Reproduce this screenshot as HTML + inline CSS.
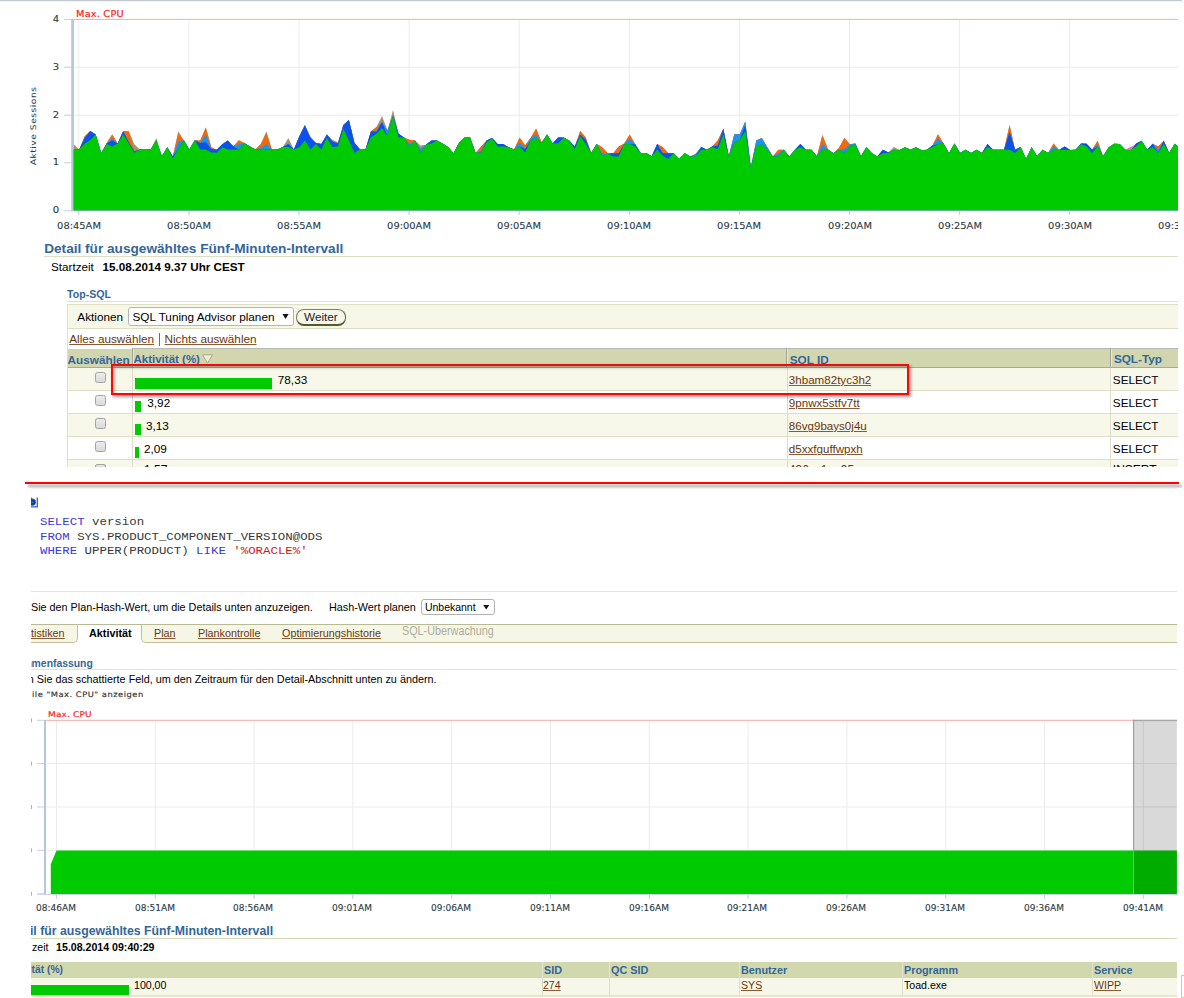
<!DOCTYPE html>
<html><head><meta charset="utf-8"><title>ASH</title><style>
html,body{margin:0;padding:0;background:#fff;}
body{width:1184px;height:998px;position:relative;overflow:hidden;font-family:"Liberation Sans",sans-serif;color:#000;}
.a{position:absolute;white-space:nowrap;line-height:1;}
.ar{font-family:"Liberation Sans",sans-serif;}
.vd{font-family:"DejaVu Sans",sans-serif;}
.mono{font-family:"Liberation Mono",monospace;}
.b{font-weight:bold;}
.blue{color:#336699;}
.lnk{color:#6a3608;text-decoration:underline;text-decoration-color:#8a5a36;}
.box{position:absolute;}
svg{position:absolute;left:0;top:0;}
</style></head><body>
<svg width="1184" height="998" viewBox="0 0 1184 998">
<defs><clipPath id="c1"><rect x="73.5" y="0" width="1104.5" height="211"/></clipPath><clipPath id="c2"><rect x="30" y="700" width="1147.5" height="230"/></clipPath></defs>
<rect x="0" y="0" width="1182" height="1.2" fill="#c4c8d0"/>
<rect x="78.3" y="19.5" width="1" height="195" fill="#ebebee"/>
<rect x="188.4" y="19.5" width="1" height="195" fill="#ebebee"/>
<rect x="298.5" y="19.5" width="1" height="195" fill="#ebebee"/>
<rect x="408.6" y="19.5" width="1" height="195" fill="#ebebee"/>
<rect x="518.7" y="19.5" width="1" height="195" fill="#ebebee"/>
<rect x="628.8" y="19.5" width="1" height="195" fill="#ebebee"/>
<rect x="738.9" y="19.5" width="1" height="195" fill="#ebebee"/>
<rect x="849.0" y="19.5" width="1" height="195" fill="#ebebee"/>
<rect x="959.1" y="19.5" width="1" height="195" fill="#ebebee"/>
<rect x="1069.2" y="19.5" width="1" height="195" fill="#ebebee"/>
<rect x="73.5" y="66.7" width="1104.5" height="1" fill="#ebebee"/>
<rect x="73.5" y="114.7" width="1104.5" height="1" fill="#ebebee"/>
<rect x="73.5" y="162.3" width="1104.5" height="1" fill="#ebebee"/>
<rect x="73.5" y="18.9" width="1104.5" height="1" fill="#f9a9a9"/>
<rect x="64" y="18.9" width="8" height="1" fill="#c3d0e2"/>
<rect x="64" y="66.7" width="8" height="1" fill="#c3d0e2"/>
<rect x="64" y="114.7" width="8" height="1" fill="#c3d0e2"/>
<rect x="64" y="162.3" width="8" height="1" fill="#c3d0e2"/>
<rect x="64" y="210.3" width="8" height="1" fill="#c3d0e2"/>
<rect x="71.2" y="19" width="2.8" height="192.3" fill="#b7c8e1"/>
<g clip-path="url(#c1)">
<path d="M73.7,210.6 L73.7,144.3 L79.2,149.5 L84.7,136.3 L90.2,130.9 L95.7,134.6 L101.2,153.2 L106.7,143.1 L112.2,134.6 L117.7,143.6 L123.2,130.9 L128.8,130.9 L134.3,144.3 L139.8,149.5 L145.3,149.5 L150.8,149.5 L156.3,138.0 L161.8,156.2 L167.3,147.3 L172.8,156.6 L178.3,131.2 L183.8,140.2 L189.3,149.5 L194.8,140.2 L200.3,140.5 L205.8,127.4 L211.3,147.3 L216.8,149.8 L222.3,144.3 L227.8,140.5 L233.3,146.5 L238.9,140.2 L244.4,143.1 L249.9,146.5 L255.4,149.5 L260.9,143.9 L266.4,131.2 L271.9,149.5 L277.4,149.5 L282.9,147.0 L288.4,138.0 L293.9,149.5 L299.4,136.3 L304.9,125.3 L310.4,136.3 L315.9,143.1 L321.4,143.9 L326.9,134.6 L332.4,139.7 L337.9,142.2 L343.4,124.5 L348.9,119.9 L354.5,143.1 L360.0,149.5 L365.5,149.5 L371.0,131.2 L376.5,127.0 L382.0,116.0 L387.5,130.4 L393.0,110.1 L398.5,133.8 L404.0,137.5 L409.5,139.7 L415.0,140.5 L420.5,145.6 L426.0,144.8 L431.5,140.5 L437.0,140.5 L442.5,143.6 L448.0,147.0 L453.5,153.2 L459.0,143.1 L464.6,137.5 L470.1,137.5 L475.6,152.9 L481.1,146.5 L486.6,140.5 L492.1,138.0 L497.6,143.9 L503.1,143.9 L508.6,147.3 L514.1,149.5 L519.6,137.5 L525.1,145.3 L530.6,138.0 L536.1,128.4 L541.6,142.2 L547.1,134.6 L552.6,143.6 L558.1,137.5 L563.6,137.5 L569.1,140.5 L574.7,146.5 L580.2,130.9 L585.7,137.2 L591.2,152.9 L596.7,143.9 L602.2,147.3 L607.7,152.9 L613.2,153.2 L618.7,146.5 L624.2,143.6 L629.7,134.6 L635.2,144.3 L640.7,152.9 L646.2,152.9 L651.7,156.2 L657.2,143.9 L662.7,147.0 L668.2,153.2 L673.7,153.2 L679.2,159.1 L684.8,153.2 L690.3,156.6 L695.8,153.7 L701.3,147.0 L706.8,149.8 L712.3,146.5 L717.8,140.2 L723.3,128.7 L728.8,156.2 L734.3,134.3 L739.8,134.3 L745.3,121.6 L750.8,167.6 L756.3,140.5 L761.8,138.0 L767.3,147.3 L772.8,156.6 L778.3,149.8 L783.8,149.8 L789.4,156.6 L794.9,149.8 L800.4,143.9 L805.9,149.8 L811.4,149.8 L816.9,156.2 L822.4,135.1 L827.9,149.0 L833.4,153.2 L838.9,148.1 L844.4,138.0 L849.9,144.3 L855.4,143.6 L860.9,156.2 L866.4,147.3 L871.9,153.2 L877.4,156.6 L882.9,149.8 L888.4,152.4 L893.9,147.0 L899.5,149.8 L905.0,147.3 L910.5,149.8 L916.0,147.3 L921.5,150.2 L927.0,149.8 L932.5,145.6 L938.0,134.3 L943.5,143.6 L949.0,153.2 L954.5,143.6 L960.0,152.9 L965.5,149.8 L971.0,152.9 L976.5,149.8 L982.0,152.9 L987.5,143.9 L993.0,149.8 L998.5,149.8 L1004.0,149.8 L1009.6,125.0 L1015.1,149.8 L1020.6,147.0 L1026.1,159.1 L1031.6,147.3 L1037.1,156.2 L1042.6,149.7 L1048.1,152.9 L1053.6,143.6 L1059.1,150.0 L1064.6,146.6 L1070.1,150.0 L1075.6,149.7 L1081.1,143.6 L1086.6,143.8 L1092.1,149.7 L1097.6,140.7 L1103.1,156.2 L1108.6,147.5 L1114.1,143.8 L1119.7,143.9 L1125.2,149.7 L1130.7,149.7 L1136.2,143.6 L1141.7,140.7 L1147.2,149.7 L1152.7,143.8 L1158.2,146.6 L1163.7,140.7 L1169.2,152.9 L1174.7,143.8 L1178.0,146.6 L1178.0,210.6 Z" fill="#a4946f"/>
<path d="M73.7,210.6 L73.7,149.5 L79.2,149.5 L84.7,136.3 L90.2,130.9 L95.7,134.6 L101.2,153.2 L106.7,143.1 L112.2,134.6 L117.7,143.6 L123.2,130.9 L128.8,132.1 L134.3,150.7 L139.8,149.5 L145.3,149.5 L150.8,149.5 L156.3,140.2 L161.8,156.2 L167.3,147.3 L172.8,156.6 L178.3,133.4 L183.8,140.2 L189.3,149.5 L194.8,140.2 L200.3,140.5 L205.8,127.4 L211.3,147.3 L216.8,149.8 L222.3,144.3 L227.8,140.5 L233.3,146.5 L238.9,140.2 L244.4,143.1 L249.9,146.5 L255.4,149.5 L260.9,143.9 L266.4,132.9 L271.9,149.5 L277.4,149.5 L282.9,147.0 L288.4,143.9 L293.9,149.5 L299.4,136.3 L304.9,125.3 L310.4,138.0 L315.9,143.1 L321.4,143.9 L326.9,134.6 L332.4,141.4 L337.9,143.6 L343.4,125.3 L348.9,119.9 L354.5,143.1 L360.0,149.5 L365.5,149.5 L371.0,131.2 L376.5,127.0 L382.0,122.0 L387.5,130.4 L393.0,115.2 L398.5,133.8 L404.0,137.5 L409.5,139.7 L415.0,140.5 L420.5,149.0 L426.0,144.8 L431.5,140.5 L437.0,140.5 L442.5,143.6 L448.0,147.0 L453.5,153.2 L459.0,143.1 L464.6,137.5 L470.1,137.5 L475.6,152.9 L481.1,146.5 L486.6,140.5 L492.1,138.0 L497.6,143.9 L503.1,143.9 L508.6,147.3 L514.1,149.5 L519.6,137.5 L525.1,145.3 L530.6,138.0 L536.1,128.4 L541.6,142.2 L547.1,134.6 L552.6,143.6 L558.1,137.5 L563.6,137.5 L569.1,140.5 L574.7,146.5 L580.2,130.9 L585.7,137.2 L591.2,152.9 L596.7,143.9 L602.2,147.3 L607.7,152.9 L613.2,153.2 L618.7,146.5 L624.2,143.6 L629.7,134.6 L635.2,144.3 L640.7,152.9 L646.2,152.9 L651.7,156.2 L657.2,143.9 L662.7,147.0 L668.2,153.2 L673.7,153.2 L679.2,159.1 L684.8,153.2 L690.3,156.6 L695.8,153.7 L701.3,147.0 L706.8,149.8 L712.3,146.5 L717.8,140.2 L723.3,128.7 L728.8,156.2 L734.3,134.3 L739.8,134.3 L745.3,121.6 L750.8,167.6 L756.3,140.5 L761.8,138.0 L767.3,147.3 L772.8,156.6 L778.3,149.8 L783.8,149.8 L789.4,156.6 L794.9,149.8 L800.4,143.9 L805.9,149.8 L811.4,149.8 L816.9,156.2 L822.4,135.1 L827.9,149.0 L833.4,153.2 L838.9,148.1 L844.4,138.0 L849.9,144.3 L855.4,143.6 L860.9,156.2 L866.4,147.3 L871.9,153.2 L877.4,156.6 L882.9,149.8 L888.4,152.4 L893.9,149.8 L899.5,150.3 L905.0,147.3 L910.5,149.8 L916.0,147.3 L921.5,150.2 L927.0,149.8 L932.5,145.6 L938.0,134.3 L943.5,143.6 L949.0,153.2 L954.5,143.6 L960.0,152.9 L965.5,149.8 L971.0,152.9 L976.5,149.8 L982.0,152.9 L987.5,143.9 L993.0,149.8 L998.5,149.8 L1004.0,149.8 L1009.6,125.0 L1015.1,149.8 L1020.6,147.0 L1026.1,159.1 L1031.6,147.3 L1037.1,156.2 L1042.6,149.7 L1048.1,152.9 L1053.6,143.6 L1059.1,150.0 L1064.6,146.6 L1070.1,150.0 L1075.6,149.7 L1081.1,143.6 L1086.6,143.8 L1092.1,149.7 L1097.6,140.7 L1103.1,156.2 L1108.6,147.5 L1114.1,143.8 L1119.7,143.9 L1125.2,149.7 L1130.7,149.7 L1136.2,143.6 L1141.7,140.7 L1147.2,149.7 L1152.7,143.8 L1158.2,146.6 L1163.7,140.7 L1169.2,152.9 L1174.7,143.8 L1178.0,146.6 L1178.0,210.6 Z" fill="#ee6a10"/>
<path d="M73.7,210.6 L73.7,149.5 L79.2,149.5 L84.7,138.0 L90.2,130.9 L95.7,134.6 L101.2,153.2 L106.7,143.6 L112.2,138.5 L117.7,143.6 L123.2,131.2 L128.8,142.2 L134.3,151.5 L139.8,149.5 L145.3,149.5 L150.8,149.5 L156.3,140.2 L161.8,156.2 L167.3,147.3 L172.8,156.6 L178.3,141.4 L183.8,140.2 L189.3,149.5 L194.8,140.2 L200.3,143.1 L205.8,134.6 L211.3,149.0 L216.8,149.8 L222.3,144.3 L227.8,140.5 L233.3,146.5 L238.9,144.3 L244.4,143.1 L249.9,146.5 L255.4,149.5 L260.9,148.1 L266.4,144.3 L271.9,149.5 L277.4,149.5 L282.9,147.0 L288.4,143.9 L293.9,149.5 L299.4,136.3 L304.9,125.3 L310.4,138.0 L315.9,143.1 L321.4,143.9 L326.9,134.6 L332.4,141.4 L337.9,143.6 L343.4,125.3 L348.9,119.9 L354.5,143.1 L360.0,149.5 L365.5,149.5 L371.0,131.2 L376.5,130.4 L382.0,122.0 L387.5,130.4 L393.0,115.2 L398.5,133.8 L404.0,137.5 L409.5,143.9 L415.0,140.5 L420.5,149.0 L426.0,144.8 L431.5,140.5 L437.0,140.5 L442.5,143.6 L448.0,147.0 L453.5,153.2 L459.0,143.1 L464.6,137.5 L470.1,137.5 L475.6,152.9 L481.1,150.7 L486.6,140.5 L492.1,138.0 L497.6,143.9 L503.1,143.9 L508.6,147.3 L514.1,149.5 L519.6,142.2 L525.1,149.0 L530.6,138.0 L536.1,134.6 L541.6,143.1 L547.1,134.6 L552.6,143.6 L558.1,137.5 L563.6,137.5 L569.1,140.5 L574.7,146.5 L580.2,134.6 L585.7,139.7 L591.2,152.9 L596.7,143.9 L602.2,153.2 L607.7,153.7 L613.2,153.2 L618.7,153.2 L624.2,144.3 L629.7,138.9 L635.2,144.3 L640.7,152.9 L646.2,152.9 L651.7,156.2 L657.2,143.9 L662.7,153.2 L668.2,153.2 L673.7,153.2 L679.2,159.1 L684.8,153.2 L690.3,156.6 L695.8,153.7 L701.3,147.0 L706.8,149.8 L712.3,146.5 L717.8,145.6 L723.3,128.7 L728.8,156.2 L734.3,134.3 L739.8,134.3 L745.3,121.6 L750.8,167.6 L756.3,140.5 L761.8,138.0 L767.3,147.3 L772.8,156.6 L778.3,153.2 L783.8,149.8 L789.4,156.6 L794.9,149.8 L800.4,143.9 L805.9,149.8 L811.4,149.8 L816.9,156.2 L822.4,144.3 L827.9,149.8 L833.4,153.2 L838.9,149.8 L844.4,149.0 L849.9,144.3 L855.4,143.6 L860.9,156.2 L866.4,147.3 L871.9,153.2 L877.4,156.6 L882.9,149.8 L888.4,152.4 L893.9,149.8 L899.5,150.3 L905.0,147.3 L910.5,149.8 L916.0,147.3 L921.5,150.2 L927.0,149.8 L932.5,145.6 L938.0,138.5 L943.5,143.6 L949.0,153.2 L954.5,143.6 L960.0,152.9 L965.5,149.8 L971.0,152.9 L976.5,149.8 L982.0,152.9 L987.5,143.9 L993.0,149.8 L998.5,149.8 L1004.0,149.8 L1009.6,132.1 L1015.1,149.8 L1020.6,147.0 L1026.1,159.1 L1031.6,147.3 L1037.1,156.2 L1042.6,149.7 L1048.1,152.9 L1053.6,146.6 L1059.1,150.0 L1064.6,146.6 L1070.1,150.0 L1075.6,149.7 L1081.1,143.6 L1086.6,143.8 L1092.1,149.7 L1097.6,143.8 L1103.1,156.2 L1108.6,147.5 L1114.1,143.8 L1119.7,143.9 L1125.2,149.7 L1130.7,149.7 L1136.2,143.6 L1141.7,140.7 L1147.2,149.7 L1152.7,143.8 L1158.2,149.7 L1163.7,140.7 L1169.2,152.9 L1174.7,143.8 L1178.0,146.6 L1178.0,210.6 Z" fill="#1a94ee"/>
<path d="M73.7,210.6 L73.7,149.5 L79.2,149.5 L84.7,138.0 L90.2,130.9 L95.7,134.6 L101.2,153.2 L106.7,143.6 L112.2,140.5 L117.7,143.6 L123.2,131.2 L128.8,142.2 L134.3,151.5 L139.8,149.5 L145.3,149.5 L150.8,149.5 L156.3,140.2 L161.8,156.2 L167.3,147.3 L172.8,156.6 L178.3,149.0 L183.8,140.2 L189.3,149.5 L194.8,140.2 L200.3,143.1 L205.8,142.2 L211.3,149.0 L216.8,149.8 L222.3,144.3 L227.8,140.5 L233.3,146.5 L238.9,149.5 L244.4,143.6 L249.9,146.5 L255.4,149.5 L260.9,149.5 L266.4,149.5 L271.9,149.5 L277.4,149.5 L282.9,147.0 L288.4,143.9 L293.9,149.5 L299.4,136.3 L304.9,125.3 L310.4,138.0 L315.9,143.1 L321.4,143.9 L326.9,134.6 L332.4,141.4 L337.9,143.6 L343.4,125.3 L348.9,119.9 L354.5,143.1 L360.0,149.5 L365.5,149.5 L371.0,131.2 L376.5,131.8 L382.0,122.0 L387.5,136.3 L393.0,115.2 L398.5,133.8 L404.0,137.5 L409.5,146.5 L415.0,140.5 L420.5,152.7 L426.0,144.8 L431.5,140.5 L437.0,140.5 L442.5,143.6 L448.0,147.0 L453.5,153.2 L459.0,143.1 L464.6,137.5 L470.1,137.5 L475.6,152.9 L481.1,152.4 L486.6,140.5 L492.1,138.0 L497.6,143.9 L503.1,143.9 L508.6,147.3 L514.1,149.5 L519.6,146.5 L525.1,149.0 L530.6,140.2 L536.1,138.0 L541.6,143.1 L547.1,134.6 L552.6,143.6 L558.1,137.5 L563.6,137.5 L569.1,140.5 L574.7,146.5 L580.2,134.6 L585.7,139.7 L591.2,152.9 L596.7,143.9 L602.2,155.7 L607.7,153.7 L613.2,153.2 L618.7,153.2 L624.2,144.3 L629.7,143.9 L635.2,144.3 L640.7,152.9 L646.2,152.9 L651.7,156.2 L657.2,143.9 L662.7,153.2 L668.2,153.2 L673.7,153.2 L679.2,159.1 L684.8,153.2 L690.3,156.6 L695.8,156.2 L701.3,147.0 L706.8,149.8 L712.3,146.5 L717.8,145.6 L723.3,128.7 L728.8,156.2 L734.3,143.1 L739.8,139.7 L745.3,125.3 L750.8,167.6 L756.3,146.5 L761.8,143.9 L767.3,149.8 L772.8,156.6 L778.3,156.2 L783.8,149.8 L789.4,156.6 L794.9,149.8 L800.4,143.9 L805.9,149.8 L811.4,149.8 L816.9,156.2 L822.4,149.8 L827.9,149.8 L833.4,153.2 L838.9,149.8 L844.4,152.9 L849.9,146.5 L855.4,144.3 L860.9,156.2 L866.4,147.3 L871.9,153.2 L877.4,156.6 L882.9,149.8 L888.4,152.4 L893.9,149.8 L899.5,150.3 L905.0,147.3 L910.5,149.8 L916.0,147.3 L921.5,150.2 L927.0,149.8 L932.5,145.6 L938.0,143.9 L943.5,143.6 L949.0,153.2 L954.5,143.6 L960.0,152.9 L965.5,149.8 L971.0,152.9 L976.5,149.8 L982.0,152.9 L987.5,143.9 L993.0,149.8 L998.5,149.8 L1004.0,149.8 L1009.6,132.1 L1015.1,149.8 L1020.6,147.0 L1026.1,159.1 L1031.6,147.3 L1037.1,156.2 L1042.6,149.7 L1048.1,152.9 L1053.6,149.7 L1059.1,150.0 L1064.6,146.6 L1070.1,150.0 L1075.6,149.7 L1081.1,143.6 L1086.6,143.8 L1092.1,149.7 L1097.6,146.6 L1103.1,156.2 L1108.6,147.5 L1114.1,143.8 L1119.7,143.9 L1125.2,149.7 L1130.7,149.7 L1136.2,143.6 L1141.7,140.7 L1147.2,149.7 L1152.7,143.8 L1158.2,152.9 L1163.7,140.7 L1169.2,152.9 L1174.7,143.8 L1178.0,146.6 L1178.0,210.6 Z" fill="#0c52ea"/>
<path d="M73.7,210.6 L73.7,149.5 L79.2,149.5 L84.7,143.6 L90.2,140.2 L95.7,134.6 L101.2,153.2 L106.7,143.9 L112.2,146.5 L117.7,143.6 L123.2,134.6 L128.8,143.6 L134.3,152.7 L139.8,149.5 L145.3,149.5 L150.8,149.5 L156.3,140.2 L161.8,156.2 L167.3,147.3 L172.8,158.3 L178.3,149.0 L183.8,140.2 L189.3,149.5 L194.8,140.2 L200.3,149.5 L205.8,149.5 L211.3,152.4 L216.8,152.7 L222.3,147.3 L227.8,149.5 L233.3,149.5 L238.9,149.5 L244.4,143.6 L249.9,146.5 L255.4,149.5 L260.9,149.5 L266.4,149.5 L271.9,149.5 L277.4,149.5 L282.9,147.0 L288.4,147.0 L293.9,149.5 L299.4,147.3 L304.9,140.5 L310.4,149.5 L315.9,143.9 L321.4,149.5 L326.9,138.0 L332.4,147.0 L337.9,146.5 L343.4,128.7 L348.9,140.5 L354.5,152.9 L360.0,149.5 L365.5,149.5 L371.0,137.2 L376.5,133.8 L382.0,127.9 L387.5,136.3 L393.0,116.0 L398.5,137.5 L404.0,137.5 L409.5,146.5 L415.0,140.5 L420.5,152.7 L426.0,144.8 L431.5,143.6 L437.0,140.5 L442.5,143.6 L448.0,147.0 L453.5,153.2 L459.0,143.1 L464.6,137.5 L470.1,137.5 L475.6,152.9 L481.1,152.4 L486.6,142.2 L492.1,138.5 L497.6,146.5 L503.1,146.5 L508.6,147.3 L514.1,149.5 L519.6,146.5 L525.1,152.4 L530.6,140.2 L536.1,138.0 L541.6,143.1 L547.1,134.6 L552.6,143.6 L558.1,143.6 L563.6,137.5 L569.1,140.5 L574.7,149.0 L580.2,136.3 L585.7,143.9 L591.2,152.9 L596.7,143.9 L602.2,155.7 L607.7,153.7 L613.2,156.6 L618.7,156.6 L624.2,144.3 L629.7,143.9 L635.2,146.5 L640.7,152.9 L646.2,152.9 L651.7,156.2 L657.2,149.8 L662.7,155.7 L668.2,159.1 L673.7,153.2 L679.2,159.1 L684.8,153.2 L690.3,156.6 L695.8,156.2 L701.3,149.8 L706.8,149.8 L712.3,147.3 L717.8,149.3 L723.3,134.6 L728.8,156.2 L734.3,143.1 L739.8,139.7 L745.3,131.2 L750.8,167.6 L756.3,146.5 L761.8,143.9 L767.3,149.8 L772.8,156.6 L778.3,156.2 L783.8,149.8 L789.4,156.6 L794.9,149.8 L800.4,147.3 L805.9,149.8 L811.4,149.8 L816.9,156.2 L822.4,149.8 L827.9,149.8 L833.4,153.2 L838.9,149.8 L844.4,152.9 L849.9,146.5 L855.4,144.3 L860.9,156.2 L866.4,147.3 L871.9,153.2 L877.4,156.6 L882.9,153.2 L888.4,152.9 L893.9,149.8 L899.5,150.3 L905.0,147.3 L910.5,149.8 L916.0,147.3 L921.5,150.2 L927.0,149.8 L932.5,147.0 L938.0,143.9 L943.5,143.6 L949.0,153.2 L954.5,143.6 L960.0,152.9 L965.5,149.8 L971.0,152.9 L976.5,149.8 L982.0,152.9 L987.5,147.3 L993.0,149.8 L998.5,149.8 L1004.0,149.8 L1009.6,149.8 L1015.1,152.9 L1020.6,147.3 L1026.1,159.1 L1031.6,147.3 L1037.1,156.2 L1042.6,149.7 L1048.1,152.9 L1053.6,149.7 L1059.1,150.0 L1064.6,149.7 L1070.1,150.0 L1075.6,149.7 L1081.1,144.3 L1086.6,146.6 L1092.1,152.9 L1097.6,146.6 L1103.1,156.2 L1108.6,147.5 L1114.1,143.8 L1119.7,143.9 L1125.2,149.7 L1130.7,149.7 L1136.2,146.6 L1141.7,140.7 L1147.2,149.7 L1152.7,147.0 L1158.2,152.9 L1163.7,144.3 L1169.2,152.9 L1174.7,143.8 L1178.0,146.6 L1178.0,210.6 Z" fill="#00ca00"/>
<path d="M1125.5,149.6 L1135.5,144.6 L1131.5,149.4 Z" fill="#f070b0"/>
</g>
<rect x="71.5" y="210.6" width="1106.5" height="0.9" fill="#d4d4ee"/>
<rect x="78.3" y="211" width="1" height="4" fill="#c3d0e2"/>
<rect x="188.4" y="211" width="1" height="4" fill="#c3d0e2"/>
<rect x="298.5" y="211" width="1" height="4" fill="#c3d0e2"/>
<rect x="408.6" y="211" width="1" height="4" fill="#c3d0e2"/>
<rect x="518.7" y="211" width="1" height="4" fill="#c3d0e2"/>
<rect x="628.8" y="211" width="1" height="4" fill="#c3d0e2"/>
<rect x="738.9" y="211" width="1" height="4" fill="#c3d0e2"/>
<rect x="849.0" y="211" width="1" height="4" fill="#c3d0e2"/>
<rect x="959.1" y="211" width="1" height="4" fill="#c3d0e2"/>
<rect x="1069.2" y="211" width="1" height="4" fill="#c3d0e2"/>
<rect x="56.0" y="720.5" width="1" height="178" fill="#ebebee"/>
<rect x="154.8" y="720.5" width="1" height="178" fill="#ebebee"/>
<rect x="253.6" y="720.5" width="1" height="178" fill="#ebebee"/>
<rect x="352.4" y="720.5" width="1" height="178" fill="#ebebee"/>
<rect x="451.2" y="720.5" width="1" height="178" fill="#ebebee"/>
<rect x="550.0" y="720.5" width="1" height="178" fill="#ebebee"/>
<rect x="648.8" y="720.5" width="1" height="178" fill="#ebebee"/>
<rect x="747.6" y="720.5" width="1" height="178" fill="#ebebee"/>
<rect x="846.4" y="720.5" width="1" height="178" fill="#ebebee"/>
<rect x="945.2" y="720.5" width="1" height="178" fill="#ebebee"/>
<rect x="1044.0" y="720.5" width="1" height="178" fill="#ebebee"/>
<rect x="1142.8" y="720.5" width="1" height="178" fill="#ebebee"/>
<rect x="46" y="763.1" width="1131.5" height="1" fill="#ebebee"/>
<rect x="46" y="806.5" width="1131.5" height="1" fill="#ebebee"/>
<rect x="46" y="849.8" width="1131.5" height="1" fill="#ebebee"/>
<rect x="46" y="719.8" width="1131.5" height="1" fill="#f9a9a9"/>
<rect x="37" y="719.8" width="7" height="1" fill="#c3d0e2"/>
<rect x="37" y="763.1" width="7" height="1" fill="#c3d0e2"/>
<rect x="37" y="806.5" width="7" height="1" fill="#c3d0e2"/>
<rect x="37" y="849.8" width="7" height="1" fill="#c3d0e2"/>
<rect x="37" y="893.3" width="7" height="1" fill="#c3d0e2"/>
<rect x="44" y="720" width="2" height="175" fill="#b3c5df"/>
<path d="M50.8,894.3 L50.8,864.2 L56.5,850.4 L1176.9,850.4 L1176.9,894.3 Z" fill="#00ca00"/>
<rect x="37" y="894" width="1140" height="0.9" fill="#ccd2ea"/>
<rect x="56.0" y="894.8" width="1" height="4" fill="#c3d0e2"/>
<rect x="154.8" y="894.8" width="1" height="4" fill="#c3d0e2"/>
<rect x="253.6" y="894.8" width="1" height="4" fill="#c3d0e2"/>
<rect x="352.4" y="894.8" width="1" height="4" fill="#c3d0e2"/>
<rect x="451.2" y="894.8" width="1" height="4" fill="#c3d0e2"/>
<rect x="550.0" y="894.8" width="1" height="4" fill="#c3d0e2"/>
<rect x="648.8" y="894.8" width="1" height="4" fill="#c3d0e2"/>
<rect x="747.6" y="894.8" width="1" height="4" fill="#c3d0e2"/>
<rect x="846.4" y="894.8" width="1" height="4" fill="#c3d0e2"/>
<rect x="945.2" y="894.8" width="1" height="4" fill="#c3d0e2"/>
<rect x="1044.0" y="894.8" width="1" height="4" fill="#c3d0e2"/>
<rect x="1142.8" y="894.8" width="1" height="4" fill="#c3d0e2"/>
<rect x="1133" y="720" width="43.9" height="174" fill="#000" fill-opacity="0.15"/>
<rect x="1133" y="719.8" width="43.9" height="1.3" fill="#a6a6a6"/>
<rect x="1133" y="719.8" width="1.1" height="174.2" fill="#9c9c9c"/>
<rect x="30.6" y="718.3" width="1" height="4" fill="#667" fill-opacity="0.85"/>
<rect x="30.6" y="761.6" width="1" height="4" fill="#667" fill-opacity="0.85"/>
<rect x="30.6" y="805.0" width="1" height="4" fill="#667" fill-opacity="0.85"/>
<rect x="30.6" y="848.3" width="1" height="4" fill="#667" fill-opacity="0.85"/>
<rect x="30.6" y="891.8" width="1" height="4" fill="#667" fill-opacity="0.85"/>
</svg>
<div class="a vd" style="left:76px;top:9.59px;font-size:8.4px;transform-origin:0 50%;transform:scaleX(1.17);color:#f22;letter-spacing:0.15px;-webkit-text-stroke:0.2px #f22;">Max. CPU</div>
<div class="a vd" style="left:56px;top:15.09px;font-size:9px;transform:translateX(-50%) scaleX(1.12);color:#2b3a42;-webkit-text-stroke:0.1px #2b3a42;">4</div>
<div class="a vd" style="left:56px;top:62.89px;font-size:9px;transform:translateX(-50%) scaleX(1.12);color:#2b3a42;-webkit-text-stroke:0.1px #2b3a42;">3</div>
<div class="a vd" style="left:56px;top:110.89px;font-size:9px;transform:translateX(-50%) scaleX(1.12);color:#2b3a42;-webkit-text-stroke:0.1px #2b3a42;">2</div>
<div class="a vd" style="left:56px;top:158.49px;font-size:9px;transform:translateX(-50%) scaleX(1.12);color:#2b3a42;-webkit-text-stroke:0.1px #2b3a42;">1</div>
<div class="a vd" style="left:56px;top:206.49px;font-size:9px;transform:translateX(-50%) scaleX(1.12);color:#2b3a42;-webkit-text-stroke:0.1px #2b3a42;">0</div>
<div class="a vd" style="left:78.8px;top:221.59px;font-size:9px;transform:translateX(-50%) scaleX(1.1);color:#2b3a42;-webkit-text-stroke:0.1px #2b3a42;">08:45AM</div>
<div class="a vd" style="left:188.89999999999998px;top:221.59px;font-size:9px;transform:translateX(-50%) scaleX(1.1);color:#2b3a42;-webkit-text-stroke:0.1px #2b3a42;">08:50AM</div>
<div class="a vd" style="left:299.0px;top:221.59px;font-size:9px;transform:translateX(-50%) scaleX(1.1);color:#2b3a42;-webkit-text-stroke:0.1px #2b3a42;">08:55AM</div>
<div class="a vd" style="left:409.09999999999997px;top:221.59px;font-size:9px;transform:translateX(-50%) scaleX(1.1);color:#2b3a42;-webkit-text-stroke:0.1px #2b3a42;">09:00AM</div>
<div class="a vd" style="left:519.1999999999999px;top:221.59px;font-size:9px;transform:translateX(-50%) scaleX(1.1);color:#2b3a42;-webkit-text-stroke:0.1px #2b3a42;">09:05AM</div>
<div class="a vd" style="left:629.3px;top:221.59px;font-size:9px;transform:translateX(-50%) scaleX(1.1);color:#2b3a42;-webkit-text-stroke:0.1px #2b3a42;">09:10AM</div>
<div class="a vd" style="left:739.3999999999999px;top:221.59px;font-size:9px;transform:translateX(-50%) scaleX(1.1);color:#2b3a42;-webkit-text-stroke:0.1px #2b3a42;">09:15AM</div>
<div class="a vd" style="left:849.4999999999999px;top:221.59px;font-size:9px;transform:translateX(-50%) scaleX(1.1);color:#2b3a42;-webkit-text-stroke:0.1px #2b3a42;">09:20AM</div>
<div class="a vd" style="left:959.5999999999999px;top:221.59px;font-size:9px;transform:translateX(-50%) scaleX(1.1);color:#2b3a42;-webkit-text-stroke:0.1px #2b3a42;">09:25AM</div>
<div class="a vd" style="left:1069.7px;top:221.59px;font-size:9px;transform:translateX(-50%) scaleX(1.1);color:#2b3a42;-webkit-text-stroke:0.1px #2b3a42;">09:30AM</div>
<div class="a vd" style="left:1179.8px;top:221.59px;font-size:9px;transform:translateX(-50%) scaleX(1.1);color:#2b3a42;-webkit-text-stroke:0.1px #2b3a42;">09:35AM</div>
<div class="a vd" style="left:0;top:0;font-size:7.8px;letter-spacing:0.4px;color:#2b3a42;transform-origin:0 0;transform:translate(30.3px,165.3px) rotate(-90deg) scaleX(1.18);">Aktive Sessions</div>
<div class="a b blue" style="left:44.2px;top:241.66px;font-size:13.63px;">Detail für ausgewähltes Fünf-Minuten-Intervall</div>
<div class="box" style="left:44px;top:255.5px;width:1134px;height:1px;background:#dcdfc3;"></div>
<div class="a " style="left:51px;top:261.30px;font-size:11.70px;">Startzeit<b style="margin-left:8.6px">15.08.2014 9.37 Uhr CEST</b></div>
<div class="a b blue" style="left:67.1px;top:289.03px;font-size:10.60px;">Top-SQL</div>
<div class="box" style="left:66.5px;top:300.9px;width:1111.5px;height:1px;background:#dfe2c8;"></div>
<div class="box" style="left:66.5px;top:303.8px;width:1111.5px;height:25.2px;background:#f7f7e8;border-top:1px solid #dde0c5;border-bottom:1px solid #dcdfc3;box-sizing:border-box;"></div>
<div class="box" style="left:66.6px;top:303.8px;width:1.2px;height:46px;background:#dfe2c8;"></div>
<div class="a " style="left:77.3px;top:311.05px;font-size:11.75px;">Aktionen</div>
<div class="box" style="left:128px;top:307px;width:166.3px;height:18.5px;background:#fff;border:1px solid #b4b4bc;border-radius:3px;box-sizing:border-box;"></div>
<div class="a " style="left:132.5px;top:311.05px;font-size:11.75px;">SQL Tuning Advisor planen</div>
<svg style="left:281px;top:313px" width="10" height="8" viewBox="0 0 10 8"><path d="M1.5,0.9 L7.6,0.9 L4.55,6.1 Z" fill="#111"/></svg>
<div class="box" style="left:296.2px;top:309px;width:49.6px;height:16.5px;background:#f6f6ea;border:1px solid #7d8258;border-right:1.5px solid #5c6238;border-bottom:2px solid #555a30;border-radius:8px;box-sizing:border-box;"></div>
<div class="a " style="left:304px;top:310.85px;font-size:11.75px;color:#222;">Weiter</div>
<div class="a " style="left:69.2px;top:332.95px;font-size:11.75px;"><span class="lnk">Alles auswählen</span></div>
<div class="box" style="left:159px;top:333px;width:1.4px;height:13px;background:#7d5fa0;"></div>
<div class="a " style="left:164.5px;top:332.95px;font-size:11.75px;"><span class="lnk">Nichts auswählen</span></div>
<div class="box" style="left:66.5px;top:349px;width:1111.5px;height:19px;background:#d2d6ae;"></div>
<div class="box" style="left:131.5px;top:348.2px;width:1046.5px;height:1px;background:#b7b8ae;"></div>
<div class="box" style="left:66.5px;top:366.7px;width:1111.5px;height:1.4px;background:#a9ad8a;"></div>
<div class="a b blue" style="left:67.6px;top:353.55px;font-size:11.75px;">Auswählen</div>
<div class="a b blue" style="left:133.5px;top:353.97px;font-size:11.50px;">Aktivität (%)</div>
<svg style="left:201.5px;top:353.5px" width="11" height="10" viewBox="0 0 11 10"><path d="M0.5,0.8 L10.5,0.8 L5.5,9.2 Z" fill="#eceed8" stroke="#a9ad8c" stroke-width="1"/></svg>
<div class="a b blue" style="left:789.7px;top:353.55px;font-size:11.75px;">SQL ID</div>
<div class="a b blue" style="left:1113.9px;top:353.35px;font-size:11.75px;">SQL-Typ</div>
<div class="box" style="left:66.5px;top:368.1px;width:1111.5px;height:21.899999999999977px;background:#f7f7ea;"></div>
<div class="box" style="left:66.5px;top:390px;width:1111.5px;height:1.1px;background:#dde0c6;"></div>
<div class="box" style="left:66.5px;top:391px;width:1111.5px;height:22px;background:#fff;"></div>
<div class="box" style="left:66.5px;top:413px;width:1111.5px;height:1.1px;background:#dde0c6;"></div>
<div class="box" style="left:66.5px;top:414px;width:1111.5px;height:22px;background:#f7f7ea;"></div>
<div class="box" style="left:66.5px;top:436px;width:1111.5px;height:1.1px;background:#dde0c6;"></div>
<div class="box" style="left:66.5px;top:437px;width:1111.5px;height:22px;background:#fff;"></div>
<div class="box" style="left:66.5px;top:459px;width:1111.5px;height:1.1px;background:#dde0c6;"></div>
<div class="box" style="left:66.5px;top:460px;width:1111.5px;height:6.5px;background:#f7f7ea;"></div>
<div class="box" style="left:66.6px;top:349px;width:1.1px;height:117.5px;background:#dde0c6;"></div>
<div class="box" style="left:131.9px;top:368px;width:1.3px;height:98.5px;background:#dcdfc5;"></div>
<div class="box" style="left:131.6px;top:348.2px;width:1px;height:19.8px;background:#a3a49a;"></div>
<div class="box" style="left:132.6px;top:349.2px;width:1px;height:17.5px;background:#e6e8d4;"></div>
<div class="box" style="left:786.6px;top:368px;width:1.3px;height:98.5px;background:#dcdfc5;"></div>
<div class="box" style="left:786.3000000000001px;top:348.2px;width:1px;height:19.8px;background:#a3a49a;"></div>
<div class="box" style="left:787.3000000000001px;top:349.2px;width:1px;height:17.5px;background:#e6e8d4;"></div>
<div class="box" style="left:1109.9px;top:368px;width:1.3px;height:98.5px;background:#dcdfc5;"></div>
<div class="box" style="left:1109.6000000000001px;top:348.2px;width:1px;height:19.8px;background:#a3a49a;"></div>
<div class="box" style="left:1110.6000000000001px;top:349.2px;width:1px;height:17.5px;background:#e6e8d4;"></div>
<div class="box" style="left:95px;top:372px;width:10.8px;height:10.8px;background:linear-gradient(#ececec,#dadada);border:1px solid #a2a2a2;border-radius:2.5px;box-sizing:border-box;"></div>
<div class="box" style="left:95px;top:394.8px;width:10.8px;height:10.8px;background:linear-gradient(#ececec,#dadada);border:1px solid #a2a2a2;border-radius:2.5px;box-sizing:border-box;"></div>
<div class="box" style="left:95px;top:417.8px;width:10.8px;height:10.8px;background:linear-gradient(#ececec,#dadada);border:1px solid #a2a2a2;border-radius:2.5px;box-sizing:border-box;"></div>
<div class="box" style="left:95px;top:440.8px;width:10.8px;height:10.8px;background:linear-gradient(#ececec,#dadada);border:1px solid #a2a2a2;border-radius:2.5px;box-sizing:border-box;"></div>
<div class="box" style="left:95px;top:463.6px;width:10.8px;height:3px;background:linear-gradient(#ececec,#dadada);border:1px solid #a2a2a2;border-radius:2.5px;box-sizing:border-box;border-bottom:none;border-radius:2.5px 2.5px 0 0;"></div>
<div class="box" style="left:135px;top:378.4px;width:136.6px;height:10.7px;background:#00ca00;"></div>
<div class="box" style="left:135px;top:401.1px;width:6.3px;height:10.6px;background:#00ca00;"></div>
<div class="box" style="left:135px;top:424.1px;width:5.5px;height:10.6px;background:#00ca00;"></div>
<div class="box" style="left:135px;top:447.1px;width:3.6px;height:10.6px;background:#00ca00;"></div>
<div class="a " style="left:277.8px;top:374.05px;font-size:11.75px;">78,33</div>
<div class="a " style="left:147.3px;top:396.55px;font-size:11.75px;">3,92</div>
<div class="a " style="left:146px;top:419.55px;font-size:11.75px;">3,13</div>
<div class="a " style="left:144px;top:442.55px;font-size:11.75px;">2,09</div>
<div class="a " style="left:788.8px;top:374.48px;font-size:11.60px;"><span class="lnk">3hbam82tyc3h2</span></div>
<div class="a " style="left:1112.8px;top:374.05px;font-size:11.75px;">SELECT</div>
<div class="a " style="left:788.8px;top:397.48px;font-size:11.60px;"><span class="lnk">9pnwx5stfv7tt</span></div>
<div class="a " style="left:1112.8px;top:397.05px;font-size:11.75px;">SELECT</div>
<div class="a " style="left:788.8px;top:420.48px;font-size:11.60px;"><span class="lnk">86vg9bays0j4u</span></div>
<div class="a " style="left:1112.8px;top:420.05px;font-size:11.75px;">SELECT</div>
<div class="a " style="left:788.8px;top:443.48px;font-size:11.60px;"><span class="lnk">d5xxfguffwpxh</span></div>
<div class="a " style="left:1112.8px;top:443.05px;font-size:11.75px;">SELECT</div>
<div class="box" style="left:66px;top:459.5px;width:1112px;height:7px;overflow:hidden;"><div class="a" style="left:78px;top:4.2px;font-size:12px;">1,57</div><div class="a" style="left:722.8px;top:4.2px;font-size:12px;"><span class="lnk">436vx1ug95ru</span></div><div class="a" style="left:1046.8px;top:4.2px;font-size:12px;">INSERT</div></div>
<div class="box" style="left:111.4px;top:363.6px;width:797.6px;height:31.6px;border:2.6px solid #f80808;box-sizing:border-box;box-shadow:2px 2px 3px rgba(0,0,0,0.4), inset 2px 2px 3px rgba(0,0,0,0.25);"></div>
<div class="box" style="left:24.5px;top:482.2px;width:1154.5px;height:2.2px;background:#ff0000;box-shadow:3px 3px 3px rgba(0,0,0,0.42);"></div>
<svg style="left:31px;top:496.5px" width="8" height="11" viewBox="0 0 8 11"><circle cx="1.3" cy="5.2" r="3.6" fill="#2a8a2a"/><circle cx="1.5" cy="5.3" r="2.7" fill="#1a22e0"/><path d="M0.6,4 L3,5.4 L0.6,6.6 Z" fill="#2aa03a"/><rect x="0" y="0.6" width="1.1" height="2" fill="#555"/><path d="M6.3,0.6 L6.3,9.9 L0,9.9" stroke="#3a5cc8" stroke-width="1.3" fill="none"/></svg>
<div class="a mono" style="left:39.5px;top:517.00px;font-size:10.7px;color:#383838;transform-origin:0 50%;transform:scaleX(1.1589);"><span style="color:#3a3adc">SELECT</span> version</div>
<div class="a mono" style="left:39.5px;top:531.70px;font-size:10.7px;color:#383838;transform-origin:0 50%;transform:scaleX(1.1589);"><span style="color:#3a3adc">FROM</span> SYS.PRODUCT_COMPONENT_VERSION@ODS</div>
<div class="a mono" style="left:39.5px;top:546.30px;font-size:10.7px;color:#383838;transform-origin:0 50%;transform:scaleX(1.1589);"><span style="color:#3a3adc">WHERE</span> UPPER(PRODUCT) <span style="color:#3a3adc">LIKE</span> <span style="color:#d01818">'%ORACLE%'</span></div>
<div class="box" style="left:30px;top:591px;width:1147.5px;height:1px;background:#e3e4d2;"></div>
<div class="a " style="left:30.8px;top:601.37px;font-size:11.61px;transform-origin:0 50%;transform:scaleX(0.93);">Sie den Plan-Hash-Wert, um die Details unten anzuzeigen.</div>
<div class="a " style="left:328.6px;top:601.37px;font-size:11.61px;transform-origin:0 50%;transform:scaleX(0.93);">Hash-Wert planen</div>
<div class="box" style="left:420.7px;top:599.1px;width:74.2px;height:16.4px;background:#fff;border:1px solid #b2b2b2;border-radius:3px;box-sizing:border-box;"></div>
<div class="a " style="left:424.6px;top:601.89px;font-size:11.24px;transform-origin:0 50%;transform:scaleX(0.93);">Unbekannt</div>
<svg style="left:482px;top:604px" width="9" height="7" viewBox="0 0 9 7"><path d="M1.2,1 L7.2,1 L4.2,5.5 Z" fill="#111"/></svg>
<div class="box" style="left:30px;top:624px;width:1147.2px;height:1.1px;background:#b7ba92;"></div>
<div class="box" style="left:30px;top:625px;width:47.9px;height:18px;background:#f6f6e6;border-bottom:1px solid #bfc29a;border-right:1px solid #bfc29a;border-radius:0 0 5px 0;box-sizing:border-box;"></div>
<div class="box" style="left:141px;top:625px;width:1036.2px;height:18px;background:#f6f6e6;border-bottom:1px solid #bfc29a;border-left:1px solid #bfc29a;border-radius:0 0 0 5px;box-sizing:border-box;"></div>
<div class="a " style="left:30.5px;top:626.67px;font-size:11.61px;transform-origin:0 50%;transform:scaleX(0.93);"><span class="lnk">tistiken</span></div>
<div class="a b" style="left:89px;top:626.67px;font-size:11.61px;transform-origin:0 50%;transform:scaleX(0.93);">Aktivität</div>
<div class="a " style="left:154.3px;top:626.67px;font-size:11.61px;transform-origin:0 50%;transform:scaleX(0.93);"><span class="lnk">Plan</span></div>
<div class="a " style="left:197.6px;top:626.67px;font-size:11.61px;transform-origin:0 50%;transform:scaleX(0.93);"><span class="lnk">Plankontrolle</span></div>
<div class="a " style="left:281.6px;top:626.67px;font-size:11.61px;transform-origin:0 50%;transform:scaleX(0.93);"><span class="lnk">Optimierungshistorie</span></div>
<div class="a " style="left:401.9px;top:626.42px;font-size:11.91px;transform-origin:0 50%;transform:scaleX(0.9067500000000001);color:#adae9a;">SQL-Überwachung</div>
<div class="a b blue" style="right:1090.80px;top:658.43px;font-size:11.18px;transform-origin:100% 50%;transform:scaleX(0.93);">Zusammenfassung</div>
<div class="box" style="left:30px;top:668.8px;width:1147.5px;height:1px;background:#e3e4d2;"></div>
<div class="a " style="right:747.80px;top:673.17px;font-size:11.61px;transform-origin:100% 50%;transform:scaleX(0.93);">Ziehen Sie das schattierte Feld, um den Zeitraum für den Detail-Abschnitt unten zu ändern.</div>
<div class="a vd" style="left:31.6px;top:690.67px;font-size:7.6px;transform-origin:0 50%;transform:scaleX(1.1);letter-spacing:0.45px;color:#333;-webkit-text-stroke:0.15px #333;">ile "Max. CPU" anzeigen</div>
<div class="a vd" style="left:48px;top:711.20px;font-size:7.8px;transform-origin:0 50%;transform:scaleX(1.15);color:#f22;letter-spacing:0.15px;-webkit-text-stroke:0.2px #f22;">Max. CPU</div>
<div class="a vd" style="left:55.8px;top:904.06px;font-size:8.2px;transform:translateX(-50%) scaleX(1.1);color:#2b3a42;-webkit-text-stroke:0.1px #2b3a42;">08:46AM</div>
<div class="a vd" style="left:154.60000000000002px;top:904.06px;font-size:8.2px;transform:translateX(-50%) scaleX(1.1);color:#2b3a42;-webkit-text-stroke:0.1px #2b3a42;">08:51AM</div>
<div class="a vd" style="left:253.4px;top:904.06px;font-size:8.2px;transform:translateX(-50%) scaleX(1.1);color:#2b3a42;-webkit-text-stroke:0.1px #2b3a42;">08:56AM</div>
<div class="a vd" style="left:352.2px;top:904.06px;font-size:8.2px;transform:translateX(-50%) scaleX(1.1);color:#2b3a42;-webkit-text-stroke:0.1px #2b3a42;">09:01AM</div>
<div class="a vd" style="left:451.0px;top:904.06px;font-size:8.2px;transform:translateX(-50%) scaleX(1.1);color:#2b3a42;-webkit-text-stroke:0.1px #2b3a42;">09:06AM</div>
<div class="a vd" style="left:549.8px;top:904.06px;font-size:8.2px;transform:translateX(-50%) scaleX(1.1);color:#2b3a42;-webkit-text-stroke:0.1px #2b3a42;">09:11AM</div>
<div class="a vd" style="left:648.5999999999999px;top:904.06px;font-size:8.2px;transform:translateX(-50%) scaleX(1.1);color:#2b3a42;-webkit-text-stroke:0.1px #2b3a42;">09:16AM</div>
<div class="a vd" style="left:747.4px;top:904.06px;font-size:8.2px;transform:translateX(-50%) scaleX(1.1);color:#2b3a42;-webkit-text-stroke:0.1px #2b3a42;">09:21AM</div>
<div class="a vd" style="left:846.1999999999999px;top:904.06px;font-size:8.2px;transform:translateX(-50%) scaleX(1.1);color:#2b3a42;-webkit-text-stroke:0.1px #2b3a42;">09:26AM</div>
<div class="a vd" style="left:944.9999999999999px;top:904.06px;font-size:8.2px;transform:translateX(-50%) scaleX(1.1);color:#2b3a42;-webkit-text-stroke:0.1px #2b3a42;">09:31AM</div>
<div class="a vd" style="left:1043.8px;top:904.06px;font-size:8.2px;transform:translateX(-50%) scaleX(1.1);color:#2b3a42;-webkit-text-stroke:0.1px #2b3a42;">09:36AM</div>
<div class="a vd" style="left:1142.6px;top:904.06px;font-size:8.2px;transform:translateX(-50%) scaleX(1.1);color:#2b3a42;-webkit-text-stroke:0.1px #2b3a42;">09:41AM</div>
<div class="a b blue" style="right:910.50px;top:923.90px;font-size:13.23px;transform-origin:100% 50%;transform:scaleX(0.93);">Detail für ausgewähltes Fünf-Minuten-Intervall</div>
<div class="box" style="left:30px;top:937.7px;width:1147.5px;height:1px;background:#d9d9b8;"></div>
<div class="a " style="left:31.8px;top:941.75px;font-size:11.40px;transform-origin:0 50%;transform:scaleX(0.93);">zeit<b style="margin-left:8.2px">15.08.2014 09:40:29</b></div>
<div class="box" style="left:30px;top:962px;width:1147.5px;height:16.3px;background:#d1d8ae;"></div>
<div class="box" style="left:30px;top:978.3px;width:1147.5px;height:17px;background:#f7f7e9;"></div>
<div class="box" style="left:30px;top:995px;width:1147.5px;height:1.6px;background:#e4e7ce;"></div>
<div class="box" style="left:541.7px;top:962px;width:1.1px;height:16.3px;background:#e2e5cd;"></div>
<div class="box" style="left:541.7px;top:978.3px;width:1.1px;height:17px;background:#dcdfc6;"></div>
<div class="box" style="left:609px;top:962px;width:1.1px;height:16.3px;background:#e2e5cd;"></div>
<div class="box" style="left:609px;top:978.3px;width:1.1px;height:17px;background:#dcdfc6;"></div>
<div class="box" style="left:739.1px;top:962px;width:1.1px;height:16.3px;background:#e2e5cd;"></div>
<div class="box" style="left:739.1px;top:978.3px;width:1.1px;height:17px;background:#dcdfc6;"></div>
<div class="box" style="left:901.8px;top:962px;width:1.1px;height:16.3px;background:#e2e5cd;"></div>
<div class="box" style="left:901.8px;top:978.3px;width:1.1px;height:17px;background:#dcdfc6;"></div>
<div class="box" style="left:1092px;top:962px;width:1.1px;height:16.3px;background:#e2e5cd;"></div>
<div class="box" style="left:1092px;top:978.3px;width:1.1px;height:17px;background:#dcdfc6;"></div>
<div class="a b blue" style="right:1121.30px;top:964.21px;font-size:11.09px;transform-origin:100% 50%;transform:scaleX(0.93);">Aktivität (%)</div>
<div class="a b blue" style="left:544.3px;top:963.77px;font-size:11.61px;transform-origin:0 50%;transform:scaleX(0.93);">SID</div>
<div class="a b blue" style="left:611.4px;top:963.77px;font-size:11.61px;transform-origin:0 50%;transform:scaleX(0.93);">QC SID</div>
<div class="a b blue" style="left:741px;top:963.77px;font-size:11.61px;transform-origin:0 50%;transform:scaleX(0.93);">Benutzer</div>
<div class="a b blue" style="left:903.9px;top:963.77px;font-size:11.61px;transform-origin:0 50%;transform:scaleX(0.93);">Programm</div>
<div class="a b blue" style="left:1094.3px;top:963.77px;font-size:11.61px;transform-origin:0 50%;transform:scaleX(0.93);">Service</div>
<div class="box" style="left:30px;top:984.8px;width:99px;height:9.8px;background:#00ca00;"></div>
<div class="a " style="left:133.9px;top:980.35px;font-size:11.40px;transform-origin:0 50%;transform:scaleX(0.93);">100,00</div>
<div class="a " style="left:543.3px;top:980.24px;font-size:11.29px;transform-origin:0 50%;transform:scaleX(0.93);"><span class="lnk">274</span></div>
<div class="a " style="left:741px;top:979.95px;font-size:11.40px;transform-origin:0 50%;transform:scaleX(0.93);"><span class="lnk">SYS</span></div>
<div class="a " style="left:903.9px;top:979.95px;font-size:11.40px;transform-origin:0 50%;transform:scaleX(0.93);">Toad.exe</div>
<div class="a " style="left:1093.8px;top:979.95px;font-size:11.40px;transform-origin:0 50%;transform:scaleX(0.93);"><span class="lnk">WIPP</span></div>
<div class="box" style="left:1178px;top:2px;width:6px;height:478px;background:#fff;"></div>
<div class="box" style="left:1177.2px;top:488px;width:6.8px;height:510px;background:#fff;"></div>
<div class="box" style="left:1180.9px;top:975px;width:6px;height:23px;border:1.3px solid #efcf3e;box-sizing:border-box;background:#fff;"></div>
<div class="box" style="left:0px;top:488px;width:30.8px;height:510px;background:#fff;"></div>
</body></html>
